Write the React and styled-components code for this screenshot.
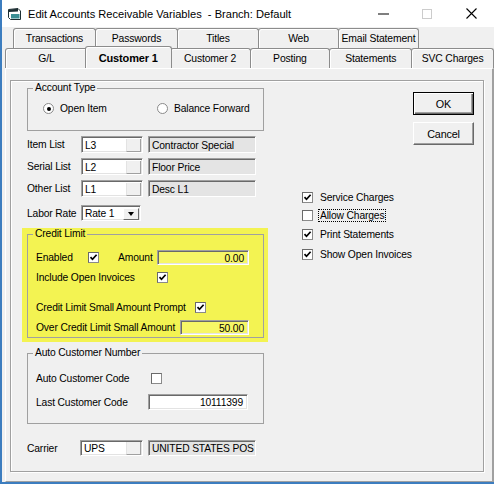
import React from 'react';
import styled, { createGlobalStyle } from 'styled-components';

const GlobalStyle = createGlobalStyle`
  html, body { margin: 0; padding: 0; background: #fff; }
  body {
    font-family: "Liberation Sans", Arial, sans-serif;
    font-size: 10.3px;
    letter-spacing: -0.15px;
    color: #000;
  }
  * { box-sizing: border-box; }
`;

const Window = styled.div`
  width: 494px;
  height: 484px;
  background: #f0f0f0;
  border-left: 2px solid #3c7dbf;
  border-bottom: 2px solid #3c7dbf;
  display: flex;
  flex-direction: column;
  overflow: hidden;
`;

const TitleBar = styled.div`
  height: 27px;
  flex: none;
  background: #fff;
  display: flex;
  align-items: center;
  padding-left: 6px;
`;

const TitleText = styled.span`
  margin-left: 7px;
  font-size: 11.1px;
  letter-spacing: 0;
  white-space: pre;
`;

const Caption = styled.div`
  margin-left: auto;
  display: flex;
  height: 100%;
`;

const CaptionButton = styled.div`
  width: ${(p) => p.$w}px;
  height: 100%;
  display: flex;
  align-items: center;
  justify-content: center;
`;

const TabStrip = styled.div`
  flex: none;
  padding-top: 1px;
`;

const TabRow = styled.div`
  display: flex;
  align-items: flex-end;
  height: 20px;
  padding-left: ${(p) => p.$pad}px;
`;

const Tab = styled.div`
  position: relative;
  z-index: ${(p) => (p.$selected ? 2 : 1)};
  width: ${(p) => p.$w}px;
  height: ${(p) => (p.$selected ? 22 : 20)}px;
  margin-left: ${(p) => p.$ml}px;
  background: #f0f0f0;
  border: 1px solid #8c8c8c;
  border-bottom: none;
  border-radius: 3px 3px 0 0;
  box-shadow: inset 1px 1px 0 #fff;
  display: flex;
  align-items: center;
  justify-content: center;
  padding-bottom: ${(p) => (p.$selected ? 0 : 1)}px;
  font-weight: ${(p) => (p.$selected ? 'bold' : 'normal')};
  font-size: ${(p) => (p.$selected ? 11 : 10.4)}px;
  white-space: nowrap;
`;

const Pane = styled.div`
  flex: 1;
  margin-left: 3px;
  border-top: 1px solid #fff;
  border-left: 1px solid #fff;
  border-right: 2px solid #a0a0a0;
  border-bottom: 1px solid #a0a0a0;
  padding: 11px 0 0 4px;
`;

const Frame = styled.div`
  width: 474px;
  height: 392px;
  border: 1px solid #a0a0a0;
  box-shadow: inset 1px 1px 0 #fff, 1px 1px 0 #fff;
  display: flex;
`;

const LeftCol = styled.div`
  margin-left: 16px;
  width: 237px;
  display: flex;
  flex-direction: column;
`;

const RightCol = styled.div`
  flex: 1;
  display: flex;
  flex-direction: column;
`;

const GroupBox = styled.fieldset`
  margin: ${(p) => p.$mt}px 0 0 0;
  padding: 0 0 ${(p) => p.$pb}px 0;
  border: 1px solid #a0a0a0;
  min-width: 0;
  width: 237px;
`;

const Legend = styled.legend`
  margin-left: 5px;
  padding: 0 2px;
  line-height: 12px;
`;

const GroupBody = styled.div`
  display: flex;
  flex-direction: column;
  padding-left: ${(p) => p.$pl}px;
`;

const RadioRow = styled.div`
  margin-top: 8px;
  display: grid;
  grid-template-columns: 114px auto;
  height: 13px;
  align-items: center;
`;

const RadioItem = styled.label`
  display: flex;
  align-items: center;
  gap: 6px;
`;

const RadioCircle = styled.span`
  width: 11px;
  height: 11px;
  border-radius: 50%;
  border: 1px solid #8a8a8a;
  background: #fff;
  display: flex;
  align-items: center;
  justify-content: center;
  &::after {
    content: '';
    width: 4px;
    height: 4px;
    border-radius: 50%;
    background: ${(p) => (p.$on ? '#000' : 'transparent')};
  }
`;

const Row = styled.div`
  display: flex;
  align-items: center;
  height: ${(p) => p.$h || 15}px;
  margin-top: ${(p) => p.$mt}px;
`;

const Label = styled.span`
  width: ${(p) => p.$w}px;
  flex: none;
  white-space: nowrap;
`;

const Sunken = styled.div`
  width: ${(p) => p.$w}px;
  height: ${(p) => p.$h || 17}px;
  flex: none;
  display: flex;
  align-items: center;
  border: 1px solid;
  border-color: #a0a0a0 #fff #fff #a0a0a0;
  box-shadow: inset 1px 1px 0 #696969, inset -1px -1px 0 #e3e3e3;
  background: ${(p) => p.$bg || '#fff'};
  padding: 1px 4px 0 3px;
  justify-content: ${(p) => (p.$right ? 'flex-end' : 'flex-start')};
  margin-left: ${(p) => p.$ml || 0}px;
  white-space: nowrap;
  overflow: hidden;
`;

const LookupText = styled.span`
  flex: 1;
`;

const LookupButton = styled.span`
  width: 15px;
  height: 13px;
  margin-right: -3px;
  background: #f0f0f0;
  border-left: 1px solid #e3e3e3;
  border-right: 1px solid #a0a0a0;
  border-bottom: 1px solid #a0a0a0;
`;

const DropButton = styled.span`
  margin-left: auto;
  margin-right: -3px;
  width: 16px;
  height: 12px;
  background: #f0f0f0;
  border: 1px solid;
  border-color: #fff #696969 #696969 #fff;
  display: flex;
  align-items: center;
  justify-content: center;
  &::after {
    content: '';
    border-left: 3.5px solid transparent;
    border-right: 3.5px solid transparent;
    border-top: 4px solid #000;
  }
`;

const Highlight = styled.div`
  margin: 7px 0 0 -5px;
  width: 246px;
  background: #f3f352;
  padding: 0 4px 4px 5px;
`;

const Box = styled.span`
  width: 11px;
  height: 11px;
  flex: none;
  background: #fff;
  border: 1px solid #8a8a8a;
  border-top-color: #6a6a6a;
  border-left-color: #6a6a6a;
  display: flex;
  align-items: center;
  justify-content: center;
`;

const Spacer = styled.span`
  width: ${(p) => p.$w}px;
  flex: none;
`;

const Buttons = styled.div`
  align-self: flex-end;
  margin: 11px 9px 0 0;
  display: flex;
  flex-direction: column;
  gap: 7px;
`;

const PushButton = styled.div`
  width: 61px;
  height: 23px;
  display: flex;
  align-items: center;
  justify-content: center;
  background: #f0f0f0;
  border: 1px solid;
  border-color: ${(p) => (p.$default ? '#000' : '#fff #696969 #696969 #fff')};
  box-shadow: ${(p) =>
    p.$default
      ? 'inset 1px 1px 0 #fff, inset -1px -1px 0 #696969, inset -2px -2px 0 #a0a0a0'
      : 'inset -1px -1px 0 #a0a0a0'};
  font-size: 10.8px;
`;

const CheckList = styled.div`
  margin: 45px 0 0 38px;
  display: flex;
  flex-direction: column;
`;

const CheckRow = styled.div`
  display: flex;
  align-items: center;
  gap: 6px;
  height: 14px;
  margin-top: ${(p) => p.$mt || 0}px;
`;

const CheckText = styled.span`
  padding: 0 1px;
  border: 1px dotted ${(p) => (p.$focus ? '#000' : 'transparent')};
  margin-left: -1px;
`;

const Check = ({ on }) => (
  <Box>
    {on && (
      <svg width="9" height="9" viewBox="0 0 9 9">
        <path d="M1.5 4.2 L3.5 6.3 L7.6 1.8" fill="none" stroke="#000" strokeWidth="1.7" />
      </svg>
    )}
  </Box>
);

const Lookup = ({ w, h, value }) => (
  <Sunken $w={w} $h={h}>
    <LookupText>{value}</LookupText>
    <LookupButton />
  </Sunken>
);

const backTabs = [
  ['Transactions', 83],
  ['Passwords', 83],
  ['Titles', 82],
  ['Web', 81],
  ['Email Statement', 81],
];

const frontTabs = [
  ['G/L', 83],
  ['Customer 1', 84, true],
  ['Customer 2', 81],
  ['Posting', 81],
  ['Statements', 83],
  ['SVC Charges', 83],
];

const lists = [
  ['Item List', 'L3', 'Contractor Special', 5],
  ['Serial List', 'L2', 'Floor Price', 5],
  ['Other List', 'L1', 'Desc L1', 5],
];

const rightChecks = [
  ['Service Charges', true, 0],
  ['Allow Charges', false, 4],
  ['Print Statements', true, 5],
  ['Show Open Invoices', true, 6],
];

function App() {
  return (
    <>
      <GlobalStyle />
      <Window>
        <TitleBar>
          <svg width="13" height="12" viewBox="0 0 13 12">
            <path d="M0.5 1.5 L10 0.5 L12.5 3 L12.5 11.5 L2.5 11.5 L0.5 9.5 Z" fill="#fff" stroke="#1d2f33" />
            <path d="M1 1.5 L10 0.8 L10 3.5 L1 4 Z" fill="#1d2f33" />
            <path d="M3 6 L11.5 6 L11.5 10.5 L3 10.5 Z" fill="#3a8f94" />
          </svg>
          <TitleText>Edit Accounts Receivable Variables  - Branch: Default</TitleText>
          <Caption>
            <CaptionButton $w={43}>
              <svg width="11" height="2"><rect width="11" height="1" y="0.5" fill="#000" /></svg>
            </CaptionButton>
            <CaptionButton $w={43}>
              <svg width="10" height="10"><rect x="0.5" y="0.5" width="9" height="9" fill="none" stroke="#cccccc" /></svg>
            </CaptionButton>
            <CaptionButton $w={46}>
              <svg width="11" height="11"><path d="M0.5 0.5 L10.5 10.5 M10.5 0.5 L0.5 10.5" stroke="#000" strokeWidth="1.1" /></svg>
            </CaptionButton>
          </Caption>
        </TitleBar>

        <TabStrip>
          <TabRow $pad={11}>
            {backTabs.map(([t, w], i) => (
              <Tab key={t} $w={w} $ml={i ? -1 : 0}>{t}</Tab>
            ))}
          </TabRow>
          <TabRow $pad={3}>
            {frontTabs.map(([t, w, sel], i) => (
              <Tab key={t} $w={sel ? w + 3 : w} $ml={i === 0 ? 0 : sel ? -3 : frontTabs[i - 1][2] ? -2 : -1} $selected={sel}>
                {t}
              </Tab>
            ))}
          </TabRow>
        </TabStrip>

        <Pane>
          <Frame>
            <LeftCol>
              <GroupBox $mt={1} $pb={15}>
                <Legend>Account Type</Legend>
                <GroupBody $pl={15}>
                  <RadioRow>
                    <RadioItem><RadioCircle $on />Open Item</RadioItem>
                    <RadioItem><RadioCircle />Balance Forward</RadioItem>
                  </RadioRow>
                </GroupBody>
              </GroupBox>

              {lists.map(([label, code, desc, mt], i) => (
                <Row key={label} $h={17} $mt={i === 0 ? 5 : mt}>
                  <Label $w={54}>{label}</Label>
                  <Lookup w={62} value={code} />
                  <Sunken $w={108} $ml={5} $bg="#e4e4e4">{desc}</Sunken>
                </Row>
              ))}

              <Row $h={16} $mt={8}>
                <Label $w={54}>Labor Rate</Label>
                <Sunken $w={60} $h={16}>
                  Rate 1
                  <DropButton />
                </Sunken>
              </Row>

              <Highlight>
                <GroupBox $mt={0} $pb={2}>
                  <Legend>Credit Limit</Legend>
                  <GroupBody $pl={8}>
                    <Row $mt={10}>
                      <Label $w={52}>Enabled</Label>
                      <Check on />
                      <Spacer $w={19} />
                      <Label $w={39}>Amount</Label>
                      <Sunken $w={92} $h={15} $bg="#f7f766" $right>0.00</Sunken>
                    </Row>
                    <Row $mt={5}>
                      <Label $w={121}>Include Open Invoices</Label>
                      <Check on />
                    </Row>
                    <Row $mt={15}>
                      <Label $w={159}>Credit Limit Small Amount Prompt</Label>
                      <Check on />
                    </Row>
                    <Row $mt={5}>
                      <Label $w={144}>Over Credit Limit Small Amount</Label>
                      <Sunken $w={69} $h={15} $bg="#f7f766" $right>50.00</Sunken>
                    </Row>
                  </GroupBody>
                </GroupBox>
              </Highlight>

              <GroupBox $mt={5} $pb={13}>
                <Legend>Auto Customer Number</Legend>
                <GroupBody $pl={8}>
                  <Row $h={14} $mt={12}>
                    <Label $w={115}>Auto Customer Code</Label>
                    <Check />
                  </Row>
                  <Row $h={16} $mt={9}>
                    <Label $w={112}>Last Customer Code</Label>
                    <Sunken $w={100} $h={16} $right>10111399</Sunken>
                  </Row>
                </GroupBody>
              </GroupBox>

              <Row $h={16} $mt={16}>
                <Label $w={53}>Carrier</Label>
                <Lookup w={63} h={16} value="UPS" />
                <Sunken $w={108} $h={16} $ml={5} $bg="#e4e4e4">UNITED STATES POS</Sunken>
              </Row>
            </LeftCol>

            <RightCol>
              <Buttons>
                <PushButton $default>OK</PushButton>
                <PushButton>Cancel</PushButton>
              </Buttons>
              <CheckList>
                {rightChecks.map(([t, on, mt]) => (
                  <CheckRow key={t} $mt={mt}>
                    <Check on={on} />
                    <CheckText $focus={!on}>{t}</CheckText>
                  </CheckRow>
                ))}
              </CheckList>
            </RightCol>
          </Frame>
        </Pane>
      </Window>
    </>
  );
}

export default App;
